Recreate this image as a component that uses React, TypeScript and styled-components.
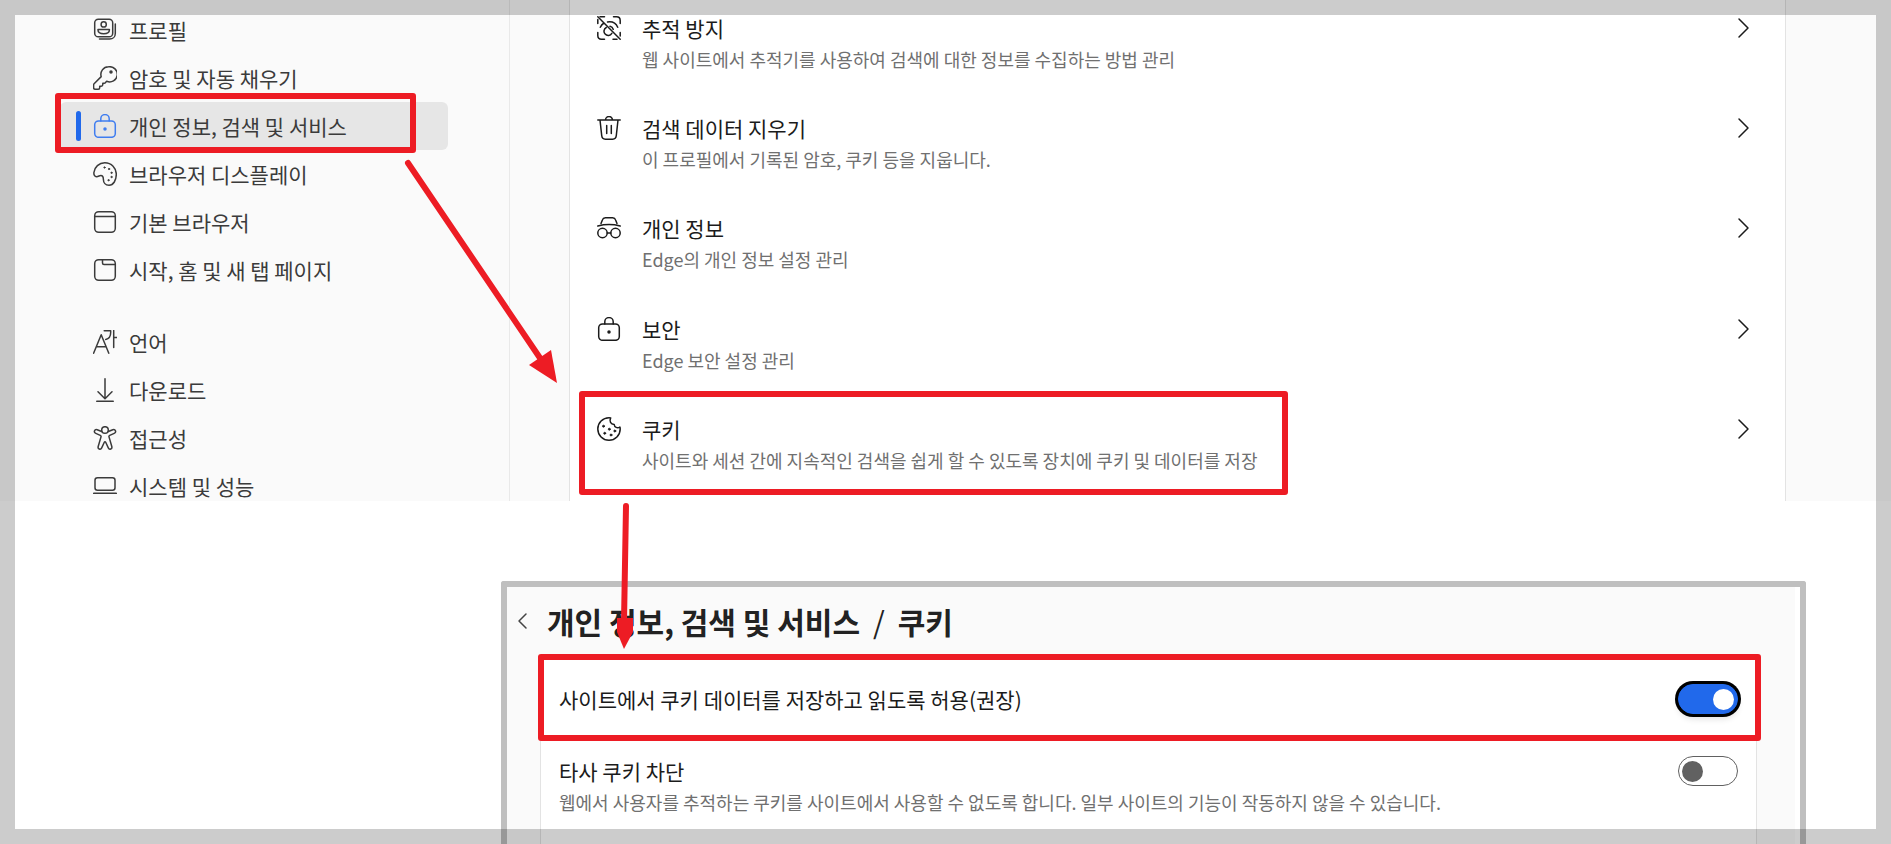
import React from "react";
import styled, { createGlobalStyle, css } from "styled-components";

const RED = "#ed1c24";

const GlobalStyle = createGlobalStyle`
  * { box-sizing: border-box; }
  body {
    margin: 0;
    background: #fff;
    font-family: "Noto Sans CJK KR", "Noto Sans", sans-serif;
    color: #1b1b1b;
  }
  h1, h2, p, ul { margin: 0; padding: 0; }
  ul { list-style: none; }
  a { color: inherit; text-decoration: none; }
`;

const Page = styled.div`
  position: relative;
  display: flex;
  flex-direction: column;
  min-height: 100vh;
  overflow: hidden;
`;

const Frame = styled.div`
  position: absolute;
  inset: 0;
  border: 15px solid rgba(0, 0, 0, 0.2);
  pointer-events: none;
`;

const Settings = styled.section`
  display: flex;
  background: #fafafa;
  padding-right: 105px;
`;

const Sidebar = styled.nav`
  flex: 0 0 510px;
  padding: 6px 61px 0 60px;
  border-right: 1px solid #e9e9e9;
  margin-right: 59px;
`;

const NavList = styled.ul`
  & + & { margin-top: 24px; }
  &:last-child { height: 183px; overflow: hidden; }
`;

const NavLink = styled.a<{ $active?: boolean }>`
  position: relative;
  display: flex;
  align-items: center;
  gap: 12px;
  height: 48px;
  padding-left: 33px;
  border-radius: 6px;
  font-size: 21px;
  line-height: 30px;
  color: #3b3b3b;
  white-space: nowrap;
  ${(p) => p.$active && css`
    background: #e6e6e6;
    svg { color: #3f7df0; }
    &::before {
      content: "";
      position: absolute;
      left: 16px;
      top: 9px;
      bottom: 9px;
      width: 5px;
      border-radius: 3px;
      background: #2169eb;
    }
  `}
`;

const Highlight = styled.span<{ $inset: string }>`
  position: absolute;
  inset: ${(p) => p.$inset};
  border: 6px solid ${RED};
  border-radius: 3px;
  pointer-events: none;
`;

const Icon = styled.svg`
  flex: none;
  width: 24px;
  height: 24px;
  fill: none;
  stroke: currentColor;
  stroke-width: 1.5;
  stroke-linecap: round;
  stroke-linejoin: round;
`;

const Options = styled.ul`
  flex: 1;
  display: flex;
  flex-direction: column;
  background: #fff;
  border: solid #e3e3e3;
  border-width: 0 1px;
`;

const OptionItem = styled.li`
  flex: 1;
  position: relative;
`;

const OptionLink = styled.a`
  display: flex;
  gap: 21px;
  padding: 13px 30px 0 27px;
`;

const OptionIcon = styled.span`
  display: flex;
  align-items: center;
  height: 30px;
`;

const Texts = styled.div`
  flex: 1;
  min-width: 0;
`;

const Title = styled.h2`
  font-size: 21px;
  font-weight: 400;
  line-height: 30px;
  color: #1b1b1b;
`;

const Description = styled.p`
  font-size: 18px;
  line-height: 32px;
  color: #707070;
`;

const Detail = styled.section`
  flex: 1;
  display: flex;
  flex-direction: column;
  margin: 80px 85px 0 501px;
  padding-right: 5px;
  border: 6px solid #bfbfbf;
  border-bottom: 0;
  border-radius: 3px 3px 0 0;
`;

const DetailBody = styled.div`
  flex: 1;
  display: flex;
  flex-direction: column;
  padding: 12px 38px 0 33px;
  background: #fafafa;
`;

const Breadcrumb = styled.header`
  display: flex;
  align-items: center;
  height: 44px;
  margin-left: -30px;
`;

const BackButton = styled.button`
  display: flex;
  width: 24px;
  height: 24px;
  margin-right: 13px;
  padding: 0;
  border: 0;
  background: none;
  color: #444;
`;

const Heading = styled.h1`
  display: flex;
  gap: 13px;
  font-size: 30px;
  font-weight: 700;
  line-height: 44px;
  color: #222;
`;

const Slash = styled.span`
  font-weight: 400;
`;

const Card = styled.div`
  flex: 1;
  margin-top: 13px;
  padding-bottom: 22px;
  background: #fff;
  border: 1px solid #e3e3e3;
  border-bottom: 0;
  border-radius: 6px 6px 0 0;
`;

const SettingRow = styled.div<{ $tall?: boolean }>`
  position: relative;
  display: flex;
  align-items: ${(p) => (p.$tall ? "center" : "flex-start")};
  justify-content: space-between;
  height: ${(p) => (p.$tall ? "84px" : "auto")};
  padding: ${(p) => (p.$tall ? "0 18px" : "15px 18px 0")};
`;

const Label = styled.label`
  display: block;
  font-size: 21px;
  line-height: 30px;
  color: #1b1b1b;
`;

const Toggle = styled.input`
  appearance: none;
  display: flex;
  align-items: center;
  flex: none;
  width: 60px;
  height: 30px;
  margin: 0;
  padding: 0 3px;
  border: 1px solid #616161;
  border-radius: 15px;
  background: #fff;
  &::before {
    content: "";
    width: 21px;
    height: 21px;
    border-radius: 50%;
    background: #616161;
  }
  &:checked {
    justify-content: flex-end;
    border-color: #2169eb;
    background: #2169eb;
    box-shadow: 0 0 0 3px #000, 0 5px 6px rgba(0, 0, 0, 0.12);
  }
  &:checked::before { background: #fff; }
`;

const Arrows = styled.svg`
  position: absolute;
  left: 0;
  top: 0;
  width: 700px;
  height: 700px;
  pointer-events: none;
  stroke: ${RED};
  stroke-width: 6;
  stroke-linecap: round;
  fill: ${RED};
`;

const icons: Record<string, React.ReactNode> = {
  profile: (
    <>
      <rect x="1.7" y="1.2" width="18" height="17.6" rx="3.6" />
      <circle cx="10.7" cy="6.4" r="2.6" />
      <path d="M5 11.5h11.4v.6c0 2.4-2.2 3.7-5.7 3.7S5 14.500 5 12.100z" />
      <path d="M22.300 6v9.400c0 3.300-2.500 5.600-5.700 5.600H6.500" />
    </>
  ),
  key: (
    <>
      <path d="M15.500.8a7.600 7.600 0 0 0-7.300 9.800L1.100 17.700c-.3.3-.5.700-.5 1.200v2.700c0 .9.700 1.600 1.600 1.600h3c.9 0 1.500-.7 1.500-1.500v-1.500h1.500c.9 0 1.600-.7 1.600-1.600v-1.400h1.400c.6 0 1-.2 1.300-.6l1.200-1.300a7.600 7.600 0 1 0 1.800-14.500z" />
      <circle cx="18" cy="6" r="1" fill="currentColor" />
    </>
  ),
  lock: (
    <>
      <rect x="1.700" y="7" width="20.600" height="16.300" rx="3.800" />
      <path d="M7.800 7V4.800a4.200 4.200 0 0 1 8.400 0V7" />
      <circle cx="12" cy="15" r="1" fill="currentColor" />
    </>
  ),
  palette: (
    <>
      <path d="M.9 10.500C1.500 5 6 .8 11.800.8c6.700 0 11.500 5.200 11.500 11.300 0 6.300-2.800 11.100-7.300 11.100-3.600 0-5.600-2.600-5.600-5.700 0-2.700-.9-4-2.600-4-1.500 0-2.300 1.200-4.200 1.200C1.600 14.700.7 12.700.9 10.500z" />
      <g fill="currentColor" strokeWidth=".8">
        <circle cx="11.500" cy="5.500" r=".7" /><circle cx="16" cy="7" r=".7" /><circle cx="18.500" cy="10.800" r=".7" />
        <circle cx="18.500" cy="15" r=".7" /><circle cx="15.500" cy="18.200" r=".7" />
      </g>
    </>
  ),
  browser: <><rect x="1.700" y="1.700" width="20.600" height="20.600" rx="4" /><path d="M1.700 6.500h20.600" /></>,
  tab: <><rect x="1.700" y="1.700" width="20.600" height="20.600" rx="4" /><path d="M9.500 1.700V5c0 .9.500 1.500 1.500 1.500h11.300" /></>,
  language: (
    <>
      <path d="M.6 23.200 8.200 4.700l7.600 18.500M3.400 16.800h9.800" />
      <path d="M11.200.8h6.500v1.400c0 4.200-1.800 6.700-5 7.200M20.700.5v17M20.700 7.500h2.900" />
    </>
  ),
  download: <><path d="M12 .8v19.500M5 13.700l7 7 7-7M3.800 23.300h16.400" /></>,
  access: (
    <>
      <circle cx="12" cy="4" r="3.300" />
      <path d="M8.700 5.500 4.200 3.700c-2.600-.9-4 2.600-1.400 3.700l4.500 2c.6.300.9.900.7 1.500L5.200 20.500c-.7 2.700 2.500 3.700 3.500 1.400l2.600-5.600c.3-.6 1.100-.6 1.400 0l2.600 5.600c1 2.300 4.200 1.300 3.500-1.400L16 10.900c-.2-.6.100-1.200.7-1.500l4.500-2c2.600-1.100 1.200-4.600-1.400-3.700l-4.500 1.800" />
    </>
  ),
  laptop: <><rect x="2" y="3.700" width="20" height="12.600" rx="2.500" /><path d="M.7 19.300h22.600" /></>,
  tracking: (
    <>
      <path d="M7.500.8H3M.8 3.500v4M16.500.8h3c2 0 3.700 1.500 3.700 3.700v3M.8 16.500v3c0 2 1.500 3.700 3.700 3.700h3M16 23.200h4M23.200 20v-3.500" />
      <path d="M.8.800l22.400 22.400M3.300 11.300c.8-1.900 2-3.300 3.700-4.300M10.500 6c4.600-.7 8.600 1.500 10.200 5.300M9.300 11.500a4.200 4.200 0 1 0 5.500 5.900M13 10.300c1.700.4 2.700 1.400 3.200 3" />
    </>
  ),
  trash: (
    <>
      <path d="M.8 4h22.400M8.500 4a3.500 3.500 0 0 1 7 0M3 4l1.700 15.500c.2 2.200 1.500 3.700 3.700 3.700h7.200c2.200 0 3.500-1.500 3.700-3.700L21 4M9.700 9.500v8M14.300 9.500v8" />
    </>
  ),
  incognito: (
    <>
      <circle cx="5.500" cy="17" r="4.700" /><circle cx="18.500" cy="17" r="4.700" />
      <path d="M10.200 17h3.600M.8 10c6.500-1.600 16-1.600 22.400 0M4 7.500l1.400-3.600c.5-1.600 1.500-2.200 3-2.200h7.200c1.500 0 2.500.6 3 2.200L20 7.500" />
    </>
  ),
  cookie: (
    <>
      <path d="M12 .8A11.200 11.200 0 1 0 23.200 12c0-.9-.1-1.500-.3-2-2.500 1.700-5.500.3-5.700-2.500C13.700 7.300 12 4.200 13.700.9c-.6-.1-1.100-.1-1.700-.1z" />
      <g fill="currentColor" strokeWidth=".8">
        <circle cx="6.500" cy="9.200" r="1" /><circle cx="12.300" cy="12.200" r="1" /><circle cx="7.700" cy="16.300" r="1" />
        <circle cx="14" cy="18" r="1" /><circle cx="17.800" cy="14" r="1" />
      </g>
    </>
  ),
  next: <path d="m8 3 9 9-9 9" />,
  back: <path d="m16 5-7 7 7 7" />,
};

const Glyph = ({ name }: { name: string }) => (
  <Icon viewBox="0 0 24 24" aria-hidden="true">{icons[name]}</Icon>
);

const navGroups = [
  [
    ["profile", "프로필"],
    ["key", "암호 및 자동 채우기"],
    ["lock", "개인 정보, 검색 및 서비스"],
    ["palette", "브라우저 디스플레이"],
    ["browser", "기본 브라우저"],
    ["tab", "시작, 홈 및 새 탭 페이지"],
  ],
  [
    ["language", "언어"],
    ["download", "다운로드"],
    ["access", "접근성"],
    ["laptop", "시스템 및 성능"],
  ],
];

const options = [
  ["tracking", "추적 방지", "웹 사이트에서 추적기를 사용하여 검색에 대한 정보를 수집하는 방법 관리"],
  ["trash", "검색 데이터 지우기", "이 프로필에서 기록된 암호, 쿠키 등을 지웁니다."],
  ["incognito", "개인 정보", "Edge의 개인 정보 설정 관리"],
  ["lock", "보안", "Edge 보안 설정 관리"],
  ["cookie", "쿠키", "사이트와 세션 간에 지속적인 검색을 쉽게 할 수 있도록 장치에 쿠키 및 데이터를 저장"],
];

export default function App() {
  return (
    <>
      <GlobalStyle />
      <Page>
        <Settings>
          <Sidebar>
            {navGroups.map((group, i) => (
              <NavList key={i}>
                {group.map(([icon, label]) => (
                  <li key={icon}>
                    <NavLink href="#" $active={icon === "lock"}>
                      <Glyph name={icon} />
                      {label}
                      {icon === "lock" && <Highlight $inset="-9px 32px -3px -5px" />}
                    </NavLink>
                  </li>
                ))}
              </NavList>
            ))}
          </Sidebar>
          <Options>
            {options.map(([icon, title, text]) => (
              <OptionItem key={icon}>
                <OptionLink href="#">
                  <OptionIcon><Glyph name={icon} /></OptionIcon>
                  <Texts>
                    <Title>{title}</Title>
                    <Description>{text}</Description>
                  </Texts>
                  <OptionIcon><Glyph name="next" /></OptionIcon>
                </OptionLink>
                {icon === "cookie" && <Highlight $inset="-10px 497px 6px 9px" />}
              </OptionItem>
            ))}
          </Options>
        </Settings>

        <Detail>
          <DetailBody>
            <Breadcrumb>
              <BackButton type="button" aria-label="뒤로"><Glyph name="back" /></BackButton>
              <Heading>
                <span>개인 정보, 검색 및 서비스</span>
                <Slash>/</Slash>
                <span>쿠키</span>
              </Heading>
            </Breadcrumb>
            <Card>
              <SettingRow $tall>
                <Label htmlFor="allow">사이트에서 쿠키 데이터를 저장하고 읽도록 허용(권장)</Label>
                <Toggle id="allow" type="checkbox" role="switch" defaultChecked />
                <Highlight $inset="-3px -5px 0 -3px" />
              </SettingRow>
              <SettingRow>
                <div>
                  <Label htmlFor="block">타사 쿠키 차단</Label>
                  <Description>웹에서 사용자를 추적하는 쿠키를 사이트에서 사용할 수 없도록 합니다. 일부 사이트의 기능이 작동하지 않을 수 있습니다.</Description>
                </div>
                <Toggle id="block" type="checkbox" role="switch" />
              </SettingRow>
            </Card>
          </DetailBody>
        </Detail>

        <Arrows viewBox="0 0 700 700" aria-hidden="true">
          <path d="M408 163 540 358" />
          <path d="M529 365 551 350 557 383z" stroke="none" />
          <path d="M626 506 624 622" />
          <path d="M617 618h16v14l-9 17-7-17z" stroke="none" />
        </Arrows>
        <Frame />
      </Page>
    </>
  );
}
